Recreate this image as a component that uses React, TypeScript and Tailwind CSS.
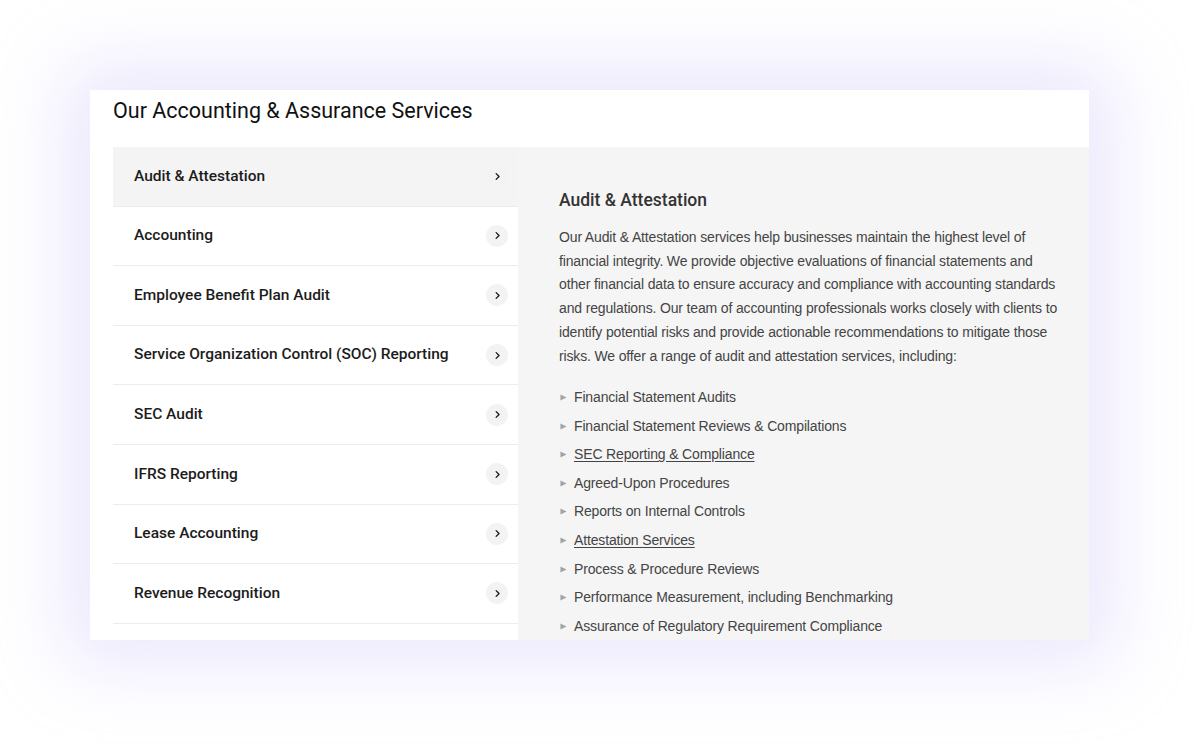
const services = [
  "Audit & Attestation",
  "Accounting",
  "Employee Benefit Plan Audit",
  "Service Organization Control (SOC) Reporting",
  "SEC Audit",
  "IFRS Reporting",
  "Lease Accounting",
  "Revenue Recognition",
];

const offerings = [
  { label: "Financial Statement Audits" },
  { label: "Financial Statement Reviews & Compilations" },
  { label: "SEC Reporting & Compliance", link: true },
  { label: "Agreed-Upon Procedures" },
  { label: "Reports on Internal Controls" },
  { label: "Attestation Services", link: true },
  { label: "Process & Procedure Reviews" },
  { label: "Performance Measurement, including Benchmarking" },
  { label: "Assurance of Regulatory Requirement Compliance" },
];

const Chevron = () => (
  <span className="flex size-[22px] shrink-0 items-center justify-center rounded-full bg-[#f3f3f3]">
    <svg viewBox="0 0 10 10" className="size-[9px]" fill="none">
      <path
        d="M3.5 1.8 L6.7 5 L3.5 8.2"
        stroke="#1a1a1a"
        strokeWidth="1.5"
        strokeLinecap="round"
        strokeLinejoin="round"
      />
    </svg>
  </span>
);

const Bullet = () => (
  <svg viewBox="0 0 8 8" className="size-[7px] shrink-0" fill="#a3a3a3">
    <path d="M0.5 0.5 L7.5 4 L0.5 7.5 Z" />
  </svg>
);

const App = () => {
  return (
    <div className="h-[751px] w-[1200px] overflow-hidden bg-white pl-[90px] pt-[90px]">
      <div className="flex h-[550px] w-[999px] flex-col overflow-hidden bg-white shadow-[0_0_70px_25px_rgba(196,180,250,0.32)]">
        <div className="h-[57px] shrink-0 px-[23px] pt-[8px]">
          <h2 className="font-['Roboto',sans-serif] text-[21.5px] font-normal leading-[26px] text-[#111]">
            Our Accounting &amp; Assurance Services
          </h2>
        </div>

        <div className="flex min-h-0 flex-1 pl-[23px]">
          <ul className="w-[405px] shrink-0 font-['Roboto',sans-serif]">
            {services.map((name, i) => (
              <li
                key={name}
                className={`flex h-[59.6px] items-center justify-between border-b border-[#ececec] pl-[21px] pr-[10px] ${
                  i === 0 ? "bg-[#f4f4f4]" : "bg-white"
                }`}
              >
                <span className="text-[15.5px] font-medium text-[#1c1c1c]">
                  {name}
                </span>
                <Chevron />
              </li>
            ))}
          </ul>

          <div className="min-w-0 flex-1 bg-[#f5f5f5] pl-[41px] pr-[24px] pt-[41px]">
            <h3 className="font-['Roboto',sans-serif] text-[17.5px] font-medium leading-[24px] text-[#333]">
              Audit &amp; Attestation
            </h3>

            <p className="mt-[14px] max-w-[506px] font-['Liberation_Sans',Arial,sans-serif] text-[14px] leading-[23.7px] tracking-[-0.15px] text-[#444]">
              Our Audit &amp; Attestation services help businesses maintain the
              highest level of financial integrity. We provide objective
              evaluations of financial statements and other financial data to
              ensure accuracy and compliance with accounting standards and
              regulations. Our team of accounting professionals works closely
              with clients to identify potential risks and provide actionable
              recommendations to mitigate those risks. We offer a range of
              audit and attestation services, including:
            </p>

            <ul className="mt-[15px] font-['Liberation_Sans',Arial,sans-serif] text-[14px] tracking-[-0.15px] text-[#444]">
              {offerings.map((item) => (
                <li
                  key={item.label}
                  className="flex h-[28.6px] items-center gap-[7px] pl-[1px]"
                >
                  <Bullet />
                  <span className={item.link ? "underline underline-offset-2" : ""}>
                    {item.label}
                  </span>
                </li>
              ))}
            </ul>
          </div>
        </div>
      </div>
    </div>
  );
};

export default App;
